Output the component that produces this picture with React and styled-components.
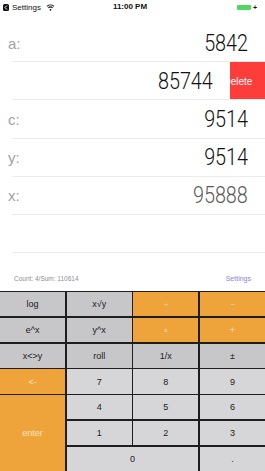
import React from "react";
import styled, { createGlobalStyle } from "styled-components";

const GlobalStyle = createGlobalStyle`
  html, body {
    margin: 0;
    padding: 0;
    background: #ffffff;
  }
  body {
    font-family: "Liberation Sans", Arial, sans-serif;
  }
`;

// b: row is mid-swipe, its label slides off the left edge
const registers = [
  { label: "a:", value: "5842" },
  { label: "", value: "85744", swiped: true },
  { label: "c:", value: "9514" },
  { label: "y:", value: "9514" },
  { label: "x:", value: "95888", muted: true },
  { label: "", value: "" },
];

const keys = [
  { label: "log", kind: "fn" },
  { label: "x√y", kind: "fn" },
  { label: "÷", kind: "op", small: true },
  { label: "−", kind: "op", small: true },
  { label: "e^x", kind: "fn" },
  { label: "y^x", kind: "fn" },
  { label: "×", kind: "op", small: true },
  { label: "+", kind: "op" },
  { label: "x<>y", kind: "fn" },
  { label: "roll", kind: "fn" },
  { label: "1/x", kind: "fn" },
  { label: "±", kind: "fn" },
  { label: "<-", kind: "op" },
  { label: "7", kind: "num" },
  { label: "8", kind: "num" },
  { label: "9", kind: "num" },
  { label: "enter", kind: "op", rows: 3 },
  { label: "4", kind: "num" },
  { label: "5", kind: "num" },
  { label: "6", kind: "num" },
  { label: "1", kind: "num" },
  { label: "2", kind: "num" },
  { label: "3", kind: "num" },
  { label: "0", kind: "num", cols: 2 },
  { label: ".", kind: "num" },
];

function App() {
  return (
    <>
      <GlobalStyle />
      <Screen>
        <StatusBar>
          <StatusLeft>
            <BackBadge>
              <svg width="4" height="5" viewBox="0 0 4 5">
                <path d="M3 0.5 L1 2.5 L3 4.5" stroke="#fff" strokeWidth="1" fill="none" />
              </svg>
            </BackBadge>
            <span>Settings</span>
            <svg width="9" height="7" viewBox="0 0 10 8" style={{ marginLeft: 3 }}>
              <path d="M1 2.6 A6 6 0 0 1 9 2.6" stroke="#111" strokeWidth="1.2" fill="none" />
              <path d="M2.6 4.3 A3.8 3.8 0 0 1 7.4 4.3" stroke="#111" strokeWidth="1.2" fill="none" />
              <circle cx="5" cy="6.6" r="1" fill="#111" />
            </svg>
          </StatusLeft>
          <Clock>11:00 PM</Clock>
          <StatusRight>
            <Battery />
            <Charge>+</Charge>
          </StatusRight>
        </StatusBar>

        <List>
          {registers.map((r, i) => (
            <RowClip key={i}>
              <RowTrack $swiped={r.swiped}>
                <RowContent>
                  <Label>{r.label}</Label>
                  <Value $muted={r.muted}>{r.value}</Value>
                </RowContent>
                {r.swiped && (
                  <DeleteButton>
                    <DeleteText>Delete</DeleteText>
                  </DeleteButton>
                )}
              </RowTrack>
            </RowClip>
          ))}
        </List>

        <Footer>
          <span>Count: 4/Sum: 110614</span>
          <SettingsLink>Settings</SettingsLink>
        </Footer>

        <Keypad>
          {keys.map((k) => (
            <Key key={k.label} $kind={k.kind} $rows={k.rows} $cols={k.cols} $small={k.small}>
              {k.label}
            </Key>
          ))}
        </Keypad>
      </Screen>
    </>
  );
}

const Screen = styled.div`
  width: 265px;
  height: 471px;
  display: flex;
  flex-direction: column;
  overflow: hidden;
  background: #fff;
`;

const StatusBar = styled.div`
  height: 24px;
  flex-shrink: 0;
  display: flex;
  align-items: flex-start;
  padding: 2px 4px 0 3px;
  box-sizing: border-box;
  font-size: 8px;
  color: #111;
`;

const StatusLeft = styled.div`
  display: flex;
  align-items: center;
  gap: 2px;
  height: 10px;
  flex: 1;
`;

const BackBadge = styled.div`
  width: 6px;
  height: 7px;
  border-radius: 1.5px;
  background: #111;
  display: flex;
  align-items: center;
  justify-content: center;
  margin-right: 1px;
`;

const Clock = styled.div`
  font-weight: bold;
  height: 10px;
  line-height: 10px;
  flex: 1;
  text-align: center;
`;

const StatusRight = styled.div`
  flex: 1;
  display: flex;
  justify-content: flex-end;
  align-items: center;
  gap: 2px;
  height: 10px;
  padding-right: 4px;
`;

const Battery = styled.div`
  width: 14px;
  height: 5px;
  background: #4cd964;
  border-radius: 1px;
`;

const Charge = styled.span`
  font-size: 7px;
  font-weight: bold;
  line-height: 7px;
`;

const List = styled.div`
  display: flex;
  flex-direction: column;
`;

const RowClip = styled.div`
  height: 38.2px;
  overflow: hidden;
  position: relative;
  &::after {
    content: "";
    position: absolute;
    left: 12px;
    right: 0;
    bottom: 0;
    height: 1px;
    background: #ebebeb;
  }
`;

const RowTrack = styled.div`
  display: flex;
  height: 100%;
  width: ${(p) => (p.$swiped ? "300px" : "265px")};
  transform: translateX(${(p) => (p.$swiped ? "-35px" : "0")});
`;

const RowContent = styled.div`
  width: 265px;
  flex-shrink: 0;
  display: flex;
  align-items: center;
  justify-content: space-between;
  padding: 0 17px 0 8px;
  box-sizing: border-box;
`;

const Label = styled.span`
  font-size: 15px;
  color: #a2a2a2;
  font-weight: 300;
`;

const Value = styled.span`
  font-family: Roboto, "Liberation Sans", sans-serif;
  font-weight: 300;
  font-size: 23px;
  color: ${(p) => (p.$muted ? "#5a5a5a" : "#111")};
  transform: scaleX(0.86);
  transform-origin: right center;
  line-height: 1;
`;

const DeleteButton = styled.div`
  width: 35px;
  flex-shrink: 0;
  background: #fc3d39;
  display: flex;
  align-items: center;
  overflow: hidden;
  white-space: nowrap;
  position: relative;
  z-index: 1;
`;

const DeleteText = styled.span`
  color: #fff;
  font-size: 10px;
  margin-left: -6.5px;
`;

const Footer = styled.div`
  height: 38px;
  flex-shrink: 0;
  display: flex;
  align-items: flex-end;
  justify-content: space-between;
  padding: 0 14px 9px 14px;
  box-sizing: border-box;
  font-size: 6.5px;
  color: #8e8e93;
`;

const SettingsLink = styled.span`
  color: #8a80e6;
  font-size: 7px;
`;

const keyBg = { fn: "#c7c7c9", num: "#d6d6d8", op: "#eea33b" };

const Keypad = styled.div`
  flex: 1;
  display: grid;
  grid-template-columns: repeat(4, 1fr);
  grid-template-rows: repeat(7, 1fr);
  gap: 1.5px;
  background: #1e1e1e;
  border-top: 1.5px solid #1e1e1e;
`;

const Key = styled.div`
  background: ${(p) => keyBg[p.$kind]};
  color: ${(p) => (p.$kind === "op" ? "#fbe6c4" : "#1a1a1a")};
  font-size: ${(p) => (p.$small ? "7px" : "9px")};
  display: flex;
  align-items: center;
  justify-content: center;
  grid-row: span ${(p) => p.$rows || 1};
  grid-column: span ${(p) => p.$cols || 1};
`;

export default App;
